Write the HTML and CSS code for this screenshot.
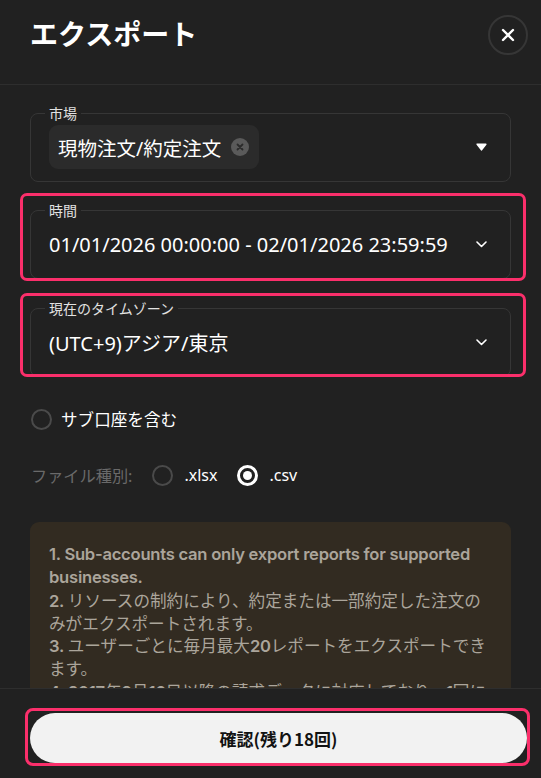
FILE: index.html
```html
<!DOCTYPE html>
<html lang="ja">
<head>
<meta charset="utf-8">
<title>エクスポート</title>
<link rel="stylesheet" href="styles.css">
</head>
<body>
<div class="modal">
  <header class="header">
    <h1 class="title">エクスポート</h1>
    <button class="close" aria-label="閉じる">
      <svg width="14" height="14" viewBox="0 0 14 14"><path d="M2 2L12 12M12 2L2 12" stroke="#fff" stroke-width="2.4" stroke-linecap="round"/></svg>
    </button>
  </header>

  <main class="content">
    <fieldset class="field field-market">
      <legend class="legend">市場</legend>
      <div class="row">
        <span class="chip">現物注文/約定注文<span class="chip-x"><svg width="8" height="8" viewBox="0 0 8 8"><path d="M1.5 1.5L6.5 6.5M6.5 1.5L1.5 6.5" stroke="#2b2b2b" stroke-width="1.8" stroke-linecap="round"/></svg></span></span>
        <svg class="caret" width="11" height="8" viewBox="0 0 11 8"><path d="M1.2 1.2H9.8L5.5 6.8Z" fill="#fff" stroke="#fff" stroke-width="1.6" stroke-linejoin="round"/></svg>
      </div>
    </fieldset>

    <div class="hl-wrap hl-time">
      <fieldset class="field">
        <legend class="legend">時間</legend>
        <div class="row">
          <span class="value">01/01/2026 00:00:00 - 02/01/2026 23:59:59</span>
          <svg class="chev" width="11" height="7" viewBox="0 0 11 7"><path d="M1 1L5.5 5.5L10 1" fill="none" stroke="#fff" stroke-width="1.6" stroke-linecap="round" stroke-linejoin="round"/></svg>
        </div>
      </fieldset>
      <span class="hl"></span>
    </div>

    <div class="hl-wrap hl-tz">
      <fieldset class="field">
        <legend class="legend">現在のタイムゾーン</legend>
        <div class="row">
          <span class="value">(UTC+9)アジア/東京</span>
          <svg class="chev" width="11" height="7" viewBox="0 0 11 7"><path d="M1 1L5.5 5.5L10 1" fill="none" stroke="#fff" stroke-width="1.6" stroke-linecap="round" stroke-linejoin="round"/></svg>
        </div>
      </fieldset>
      <span class="hl"></span>
    </div>

    <label class="check">
      <span class="radio"></span>
      <span class="check-text">サブ口座を含む</span>
    </label>

    <div class="filetype">
      <span class="ft-label">ファイル種別:</span>
      <span class="opt"><span class="radio"></span><span class="opt-text">.xlsx</span></span>
      <span class="opt"><span class="radio radio-on"></span><span class="opt-text">.csv</span></span>
    </div>

    <div class="info">
      <p class="info-line"><span class="en">1. Sub-accounts can only export reports for supported businesses.</span></p>
      <p class="info-line"><span class="en">2.</span> リソースの制約により、約定または一部約定した注文のみがエクスポートされます。</p>
      <p class="info-line"><span class="en">3.</span> ユーザーごとに毎月最大<span class="en">20</span>レポートをエクスポートできます。</p>
      <p class="info-line"><span class="en">4.</span> <span class="en">2017</span>年<span class="en">9</span>月<span class="en">16</span>日以降の請求データに対応しており、<span class="en">1</span>回につき最大<span class="en">3</span>か月分のデータをエクスポートできます。</p>
    </div>
  </main>

  <footer class="footer">
    <div class="btn-wrap">
      <button class="confirm">確認(残り18回)</button>
      <span class="hl hl-btn"></span>
    </div>
  </footer>
</div>
</body>
</html>
```

FILE: styles.css
```css
* { box-sizing: border-box; }
html, body { margin: 0; padding: 0; }
body {
  background: #212121;
  color: #fff;
  font-family: "Noto Sans", "Noto Sans CJK JP", sans-serif;
  width: 541px;
  height: 778px;
  overflow: hidden;
}
.modal {
  display: flex;
  flex-direction: column;
  height: 778px;
}
.header {
  flex: none;
  height: 85px;
  border-bottom: 1px solid #2e2e2e;
  display: flex;
  justify-content: space-between;
  align-items: flex-start;
  padding: 15px 13px 0 30px;
}
.title {
  margin: 0;
  font-family: "Noto Sans CJK JP", sans-serif;
  font-weight: 700;
  font-size: 28px;
  line-height: 36px;
  color: #fff;
}
.close {
  width: 40px;
  height: 40px;
  border-radius: 50%;
  border: 2px solid #363636;
  background: transparent;
  display: flex;
  align-items: center;
  justify-content: center;
  padding: 0;
}
.content {
  flex: 1;
  min-height: 0;
  overflow: hidden;
  padding: 20px 30px 0;
  display: flex;
  flex-direction: column;
}
.field {
  margin: 0;
  padding: 0;
  min-width: 0;
  border: 1px solid #363636;
  border-radius: 8px;
}
.legend {
  margin-left: 14px;
  padding: 0 4px;
  font-family: "Noto Sans CJK JP", sans-serif;
  font-size: 14px;
  line-height: 16px;
  color: #e2e2e2;
}
.row {
  height: 60px;
  padding: 0 23px 8px 18px;
  display: flex;
  align-items: center;
  justify-content: space-between;
}
.chip {
  height: 44px;
  display: inline-flex;
  align-items: center;
  gap: 10px;
  padding: 0 10px 0 9px;
  background: #2b2b2b;
  border-radius: 9px;
  font-size: 19.5px;
  color: #fff;
}
.chip-x {
  width: 18px;
  height: 18px;
  border-radius: 50%;
  background: #5a5a5a;
  display: inline-flex;
  align-items: center;
  justify-content: center;
}
.value {
  font-size: 20px;
  color: #fff;
  white-space: nowrap;
}
.hl-wrap {
  position: relative;
  margin-top: 20px;
}
.hl-tz { margin-top: 21px; }
.hl {
  position: absolute;
  border: 3px solid #fb2f6b;
  border-radius: 7px;
  pointer-events: none;
}
.hl-time .hl { top: -9px; left: -10px; right: -15px; bottom: -2px; }
.hl-tz .hl { top: -7px; left: -10px; right: -15px; bottom: 0; }

.check {
  margin-top: 30px;
  height: 24px;
  display: flex;
  align-items: center;
  gap: 9px;
  padding-left: 1px;
}
.radio {
  width: 21px;
  height: 21px;
  border-radius: 50%;
  border: 2px solid #4a4a4a;
  flex: none;
  display: inline-block;
}
.radio-on {
  border: 3px solid #fff;
  position: relative;
}
.radio-on::after {
  content: "";
  position: absolute;
  left: 3px;
  top: 3px;
  width: 9px;
  height: 9px;
  border-radius: 50%;
  background: #fff;
}
.check-text {
  font-size: 16.6px;
  color: #fff;
}
.filetype {
  margin-top: 32px;
  height: 24px;
  display: flex;
  align-items: center;
  padding-left: 1px;
}
.ft-label {
  font-size: 16.2px;
  color: #6a6a6a;
  margin-right: 20px;
}
.opt {
  display: inline-flex;
  align-items: center;
  gap: 11px;
  margin-right: 20px;
}
.opt-text {
  font-size: 16px;
  color: #fff;
}
.info {
  margin-top: 35px;
  flex: none;
  background: #322b21;
  border-radius: 9px;
  padding: 20px 19px 20px 19px;
}
.info-line {
  margin: 0;
  font-family: "Noto Sans CJK JP", sans-serif;
  font-size: 16.6px;
  line-height: 22.3px;
  color: #aba59b;
}
.en {
  font-family: Inter, "Noto Sans", sans-serif;
  font-weight: 600;
  letter-spacing: -0.25px;
}
.footer {
  flex: none;
  height: 90px;
  border-top: 1px solid #2e2e2e;
  padding: 24px 14px 0 30px;
  background: #212121;
}
.btn-wrap {
  position: relative;
}
.confirm {
  display: block;
  width: 100%;
  height: 50px;
  border: none;
  border-radius: 25px;
  background: #f2f2f2;
  color: #121212;
  font-family: "Noto Sans CJK JP", sans-serif;
  font-weight: 700;
  font-size: 17px;
}
.hl-btn { top: -5px; left: -5px; right: -3px; bottom: -3px; border-radius: 8px; }
```
